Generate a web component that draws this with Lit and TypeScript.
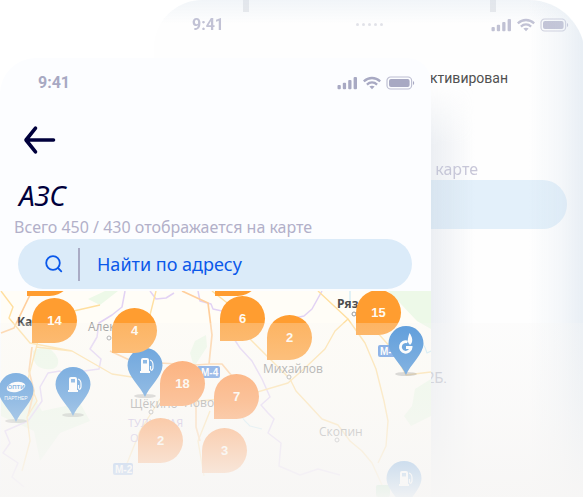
import { LitElement, html, css, svg, nothing } from "lit";
import { customElement, property } from "lit/decorators.js";

@customElement("status-bar")
class StatusBar extends LitElement {
  @property({ type: Boolean }) dots = false;

  static styles = css`
    :host {
      display: grid;
      grid-template-columns: 1fr auto 1fr;
      align-items: center;
      height: 48px;
      padding: 1px 16px 0 38px;
      box-sizing: border-box;
      color: #a8a9c3;
    }
    .time {
      font: 700 16px/20px Roboto, sans-serif;
    }
    .dots {
      display: flex;
      gap: 3px;
      margin-right: 22px;
    }
    .dot {
      width: 3px;
      height: 3px;
      border-radius: 50%;
      background: #d6d7e0;
    }
    .signals {
      justify-self: end;
      display: block;
    }
  `;

  render() {
    return html`
      <span class="time">9:41</span>
      <span class="dots">
        ${this.dots ? [1, 2, 3, 4, 5].map(() => html`<span class="dot"></span>`) : nothing}
      </span>
      <svg class="signals" width="78" height="14" viewBox="0 0 78 14" fill="currentColor" aria-hidden="true">
        <rect x="0.5" y="9" width="3.3" height="4.3" rx="1" />
        <rect x="5.8" y="6.7" width="3.3" height="6.6" rx="1" />
        <rect x="11.2" y="4" width="3.3" height="9.3" rx="1" />
        <rect x="16.6" y="1" width="3.4" height="12.3" rx="1" />
        <g fill="none" stroke="currentColor" stroke-width="2.3">
          <path d="M26.8 5.3C31.6 .9 38.4 .9 43.2 5.3" />
          <path d="M29.9 8.6C32.9 5.8 37.1 5.8 40.1 8.6" />
        </g>
        <path d="M32.4 10.6C33.9 9.3 36.1 9.3 37.6 10.6L35 13.3Z" />
        <rect x="50" y="1" width="24.6" height="12" rx="3.6" fill="none" stroke="currentColor" stroke-width="1.2" opacity=".75" />
        <rect x="52" y="3" width="20.6" height="8" rx="2" />
        <path d="M76 5C77.6 5.6 77.6 8.4 76 9Z" />
      </svg>
    `;
  }
}

type Cluster = [x: number, y: number, count: string];
type Station = [x: number, y: number, kind: "pump" | "partner" | "gazprom"];

const clusters: Cluster[] = [
  [27, -40, ""],
  [215, -40, ""],
  [32, 7, "14"],
  [112, 17, "4"],
  [220, 5, "6"],
  [267, 24, "2"],
  [356, -1, "15"],
  [160, 70, "18"],
  [214, 83, "7"],
  [138, 127, "2"],
  [202, 137, "3"],
];

const stations: Station[] = [
  [16, 82, "partner"],
  [73, 76, "pump"],
  [145, 57, "pump"],
  [406, 35, "gazprom"],
  [404, 170, "pump"],
];

@customElement("station-map")
class StationMap extends LitElement {
  static styles = css`
    :host {
      display: block;
      overflow: hidden;
    }
    .map {
      display: block;
      width: 100%;
      height: 100%;
    }
    .major { stroke: #ffcf9c; stroke-width: 1.7; }
    .road { stroke: #ffdf9f; stroke-width: 1.4; }
    .border { stroke: #e2d2f4; stroke-width: 1.5; }
    .river { stroke: #cdeaf3; stroke-width: 1.2; }
    .town { font: 12px "Open Sans", sans-serif; fill: #8b8b8b; }
    .city { font: 700 12px "Open Sans", sans-serif; fill: #4c4c4c; }
    .region { font: 11px "Open Sans", sans-serif; fill: #b9a8d8; }
    .shield { font: 700 10px "Liberation Sans", sans-serif; fill: #fff; }
    .count { font: 700 13px "Liberation Sans", sans-serif; fill: #fffaf0; text-anchor: middle; }
    .partner { font: 5px "Liberation Sans", sans-serif; fill: #fff; text-anchor: middle; }
    .brand { font: 700 6px "Liberation Sans", sans-serif; fill: #2b7fd2; text-anchor: middle; }
  `;

  private glyph(kind: Station[2]) {
    if (kind === "partner") {
      return svg`
        <ellipse cx="0" cy="14" rx="9.5" ry="5" fill="#fff" transform="rotate(-12 0 14)" />
        <text class="brand" x="0" y="16">ОПТИ</text>
        <text class="partner" x="0" y="27">ПАРТНЕР</text>`;
    }
    if (kind === "gazprom") {
      return svg`
        <path d="M1.500 16A5.300 5.300 0 1 0 5 21.500H0" fill="none" stroke="#fff" stroke-width="2.800" />
        <path d="M4 19C.8 16 1.500 13 3.500 7C6.500 11 7.500 16 4 19Z" fill="#fff" />`;
    }
    return svg`
      <path d="M-4 12Q-4 10 -2 10H2Q4 10 4 12V23H5V25H-5V23H-4Z" fill="#fff" />
      <rect x="-2" y="12" width="4" height="3.500" fill="#4c93da" />
      <path d="M5 12Q8 13 8 17V20Q7 24 5.500 21V18" fill="none" stroke="#fff" stroke-width="1.200" />`;
  }

  render() {
    return html`
      <svg class="map" viewBox="0 0 431 206" preserveAspectRatio="xMidYMin slice" role="img" aria-label="АЗС">
        <rect x="1" width="430" height="206" fill="#fffdf7" />
        <g fill="#edf9e8">
          <path d="M388 0H431V38L417 30L400 12Z" />
          <path d="M33 60Q50 50 58 68Q60 80 45 78Q32 76 33 60Z" />
          <path d="M195 50L206 44L207 56L194 76L190 62Z" />
          <path d="M431 88L415 98L412 115L404 125L411 135L431 125Z" />
          <path d="M1 108L30 100L42 120L80 112L90 130L60 142L40 170L34 140L1 125Z" />
          <path d="M88 8L105 0H118L100 14Z" />
        </g>
        <g fill="none" stroke-linejoin="round">
          <path class="river" d="M350 0V10M415 48Q424 50 427 62L431 60M236 110Q238 125 250 135L262 138" />
          <path class="border" d="M150 0L156 8L166 7L174 2M198 0L200 10L211 13L213 18L222 20L225 34L240 57L252 70L262 88L270 106L261 114L268 122L274 128L268 142L281 152L279 175L300 184L318 178L340 184" />
          <path class="border" d="M125 0L122 16L112 24L99 32L97 46L90 58L101 68L99 78L84 80L72 88L60 80L48 82L40 96L42 110L28 130L5 140L10 152L3 162L18 172L12 186L24 196" />
          <path class="border" d="M272 40L275 30L290 28L304 25L312 18L322 0" />
          <path class="major" d="M1 42L14 37L28 8L32 0M32 56L29 80L34 100L28 125M182 0L208 12L212 44L209 73L196 74L160 72L148 92M209 73L222 73L236 90L216 110" />
          <path class="road" d="M1 0L13 16L9 27L30 52L72 60L112 83L145 88M72 60L36 56M100 14L65 22L38 50L28 88L37 110L27 126L30 150L22 180" />
          <path class="road" d="M212 0L240 22L250 48L270 68L290 88L296 100L310 115L322 128L338 134L350 150L362 160L372 172L382 194" />
          <path class="road" d="M318 0L348 28L335 40L325 58L306 76L288 92L240 106L200 110L160 108L140 140L124 180M156 0L150 24" />
          <path class="road" d="M348 28L365 52L376 78L384 110L388 130L386 155L378 172M376 40L392 58L406 84L431 81M210 120L198 150L204 185" />
          <path class="major" d="M196 110L196 136L200 150M110 60L136 72" />
        </g>
        <g fill="#fff" stroke="#999">
          <circle cx="109" cy="47" r="2" />
          <circle cx="289" cy="86" r="2" />
          <circle cx="151" cy="121" r="2" />
          <circle cx="337" cy="149" r="2" />
          <circle cx="354" cy="23" r="2" />
        </g>
        <text class="city" x="17" y="35">Ка.</text>
        <text class="city" x="337" y="17">Ряза</text>
        <text class="town" x="88" y="40">Алек</text>
        <text class="town" x="263" y="82">Михайлов</text>
        <text class="town" x="319" y="145">Скопин</text>
        <text class="town" x="130" y="117">Щёкино</text>
        <text class="town" x="184" y="116">Ново</text>
        <text class="region" x="128" y="136">ТУЛЬСКАЯ</text>
        <text class="region" x="130" y="151">О</text>
        <g fill="#568fe0">
          <rect x="197" y="75" width="23" height="12" rx="2" />
          <rect x="378" y="54" width="22" height="12" rx="2" />
          <rect x="113" y="172" width="20" height="12" rx="2" />
          <rect x="376" y="194" width="14" height="12" rx="2" fill="#6fcf8f" />
        </g>
        <text class="shield" x="201" y="85">М-4</text>
        <text class="shield" x="380" y="64">М-</text>
        <text class="shield" x="115" y="182">М-2</text>

        ${stations.map(
          ([x, y, kind]) => svg`
            <g transform="translate(${x} ${y})">
              <ellipse cx="0" cy="48" rx="11" ry="2" fill="#555" opacity=".35" />
              <path d="M0 49C-4 39 -17.500 28 -17.500 17.500A17.500 17.500 0 0 1 17.500 17.500C17.500 28 4 39 0 49Z" fill="#2b7fd2" />
              ${this.glyph(kind)}
            </g>`
        )}
        ${clusters.map(
          ([x, y, count]) => svg`
            <g transform="translate(${x} ${y})">
              <path d="M0 45V22.500A22.500 22.500 0 1 1 22.500 45Z" fill=${y > 50 ? "#ff8a38" : "#ff9d30"} />
              <text class="count" x="22.500" y="27">${count}</text>
            </g>`
        )}
      </svg>
    `;
  }
}

@customElement("app-root")
class AppRoot extends LitElement {
  static styles = css`
    :host {
      display: block;
      height: 100vh;
      overflow: hidden;
      background: #fff;
      font-family: "Noto Sans", sans-serif;
    }
    .stage {
      display: grid;
      grid-template-columns: 154px 1fr 154px;
      grid-template-rows: 100%;
      height: 100%;
      margin-right: -2px;
    }
    .phone {
      grid-row: 1;
      display: flex;
      flex-direction: column;
      box-sizing: border-box;
      overflow: hidden;
    }
    .rear {
      grid-column: 2 / 4;
      position: relative;
      border-radius: 48px 56px 0 0;
      background: #fefefe;
    }
    .rear::before,
    .rear::after {
      content: "";
      position: absolute;
      top: 0;
      width: 6px;
      height: 12px;
      background: #e9eaed;
    }
    .rear::before { left: 89px; }
    .rear::after { right: 89px; }
    .shade {
      grid-row: 1;
      grid-column: 2 / 4;
      z-index: 1;
      pointer-events: none;
      border-radius: 48px 56px 0 0;
      background:
        linear-gradient(to left, rgba(205, 219, 233, 0.45), rgba(205, 219, 233, 0.2) 24px, transparent 56px),
        linear-gradient(rgba(205, 219, 233, 0.25), transparent 24px);
    }
    .cast {
      grid-row: 1;
      grid-column: 3;
      z-index: 1;
      width: 44px;
      margin-top: 84px;
      pointer-events: none;
      background: linear-gradient(to right, rgba(190, 200, 215, 0.28), transparent);
      mask-image: linear-gradient(transparent, #000 60px);
    }
    .faint { opacity: 0.7; }
    .front {
      grid-column: 1 / 3;
      z-index: 2;
      margin-top: 58px;
      border-radius: 36px 24px 0 0;
      background: #fcfdff;
    }
    .fade {
      grid-row: 1;
      grid-column: 1 / 4;
      z-index: 3;
      align-self: end;
      height: 35%;
      pointer-events: none;
      background: linear-gradient(rgba(247, 246, 245, 0.26), rgba(247, 246, 245, 0.52) 45%, rgba(247, 246, 245, 0.96));
    }
    .back {
      align-self: flex-start;
      height: 68px;
      margin: 0;
      padding: 0 23px;
      border: 0;
      background: none;
    }
    .back svg { display: block; }
    .title {
      margin: 0;
      padding-left: 19px;
      font-size: 28px;
      font-style: italic;
      font-weight: 400;
      line-height: 42px;
      color: #00003c;
    }
    .summary {
      margin: 0;
      padding-left: 14px;
      font-size: 16px;
      line-height: 23px;
      white-space: nowrap;
      color: #b2b0c9;
    }
    .search {
      display: flex;
      align-items: center;
      flex: none;
      height: 50px;
      margin: 0 19px 0 18px;
      padding-left: 27px;
      border-radius: 25px;
      background: #dbebf9;
      box-sizing: border-box;
    }
    .divider {
      height: 33px;
      margin: 0 17px 0 15px;
      border-left: 2px solid #a9abc5;
    }
    .field {
      flex: 1;
      min-width: 0;
      padding: 0;
      border: 0;
      outline: 0;
      background: none;
      font: 18px/26px "Noto Sans", sans-serif;
      color: #0a58ea;
    }
    .field::placeholder {
      color: #0a58ea;
      opacity: 1;
    }
    .map {
      flex: 1;
      min-height: 0;
      margin-top: 2px;
    }
    .notice {
      margin: 20px 77px 0 0;
      font: 14px/20px Roboto, sans-serif;
      text-align: right;
      color: #505050;
    }
    .rear .summary {
      margin: 70px 107px 0 0;
      text-align: right;
    }
    .slot {
      flex: none;
      height: 49px;
      margin: -1px 18px 0;
      border-radius: 25px;
      background: #e3f0fa;
    }
    .address {
      margin: 139px 138px 0 0;
      font: 14px/20px Roboto, sans-serif;
      text-align: right;
      color: #b4b5c2;
    }
  `;

  render() {
    return html`
      <main class="stage">
        <section class="phone rear">
          <status-bar class="faint" dots></status-bar>
          <p class="notice">активирован</p>
          <p class="summary faint">карте</p>
          <div class="slot"></div>
          <p class="address">2Б.</p>
        </section>
        <div class="shade"></div>
        <div class="cast"></div>

        <section class="phone front">
          <status-bar></status-bar>
          <button class="back" type="button" aria-label="Назад">
            <svg width="33" height="30" viewBox="0 0 33 30" fill="none" stroke="#00003c" stroke-width="3.600" stroke-linecap="round" stroke-linejoin="round">
              <path d="M30.500 15H3M12.500 3.200L3 15L12.500 26.800" />
            </svg>
          </button>
          <h1 class="title">АЗС</h1>
          <p class="summary">Всего 450 / 430 отображается на карте</p>
          <label class="search">
            <svg width="18" height="18" viewBox="0 0 18 18" fill="none" stroke="#0a58ea" stroke-width="1.800" stroke-linecap="round" aria-hidden="true">
              <circle cx="8" cy="8" r="6.800" />
              <path d="M13 13L16.300 16.300" />
            </svg>
            <span class="divider"></span>
            <input class="field" type="text" placeholder="Найти по адресу" aria-label="Найти по адресу" />
          </label>
          <station-map class="map"></station-map>
        </section>
        <div class="fade"></div>
      </main>
    `;
  }
}
